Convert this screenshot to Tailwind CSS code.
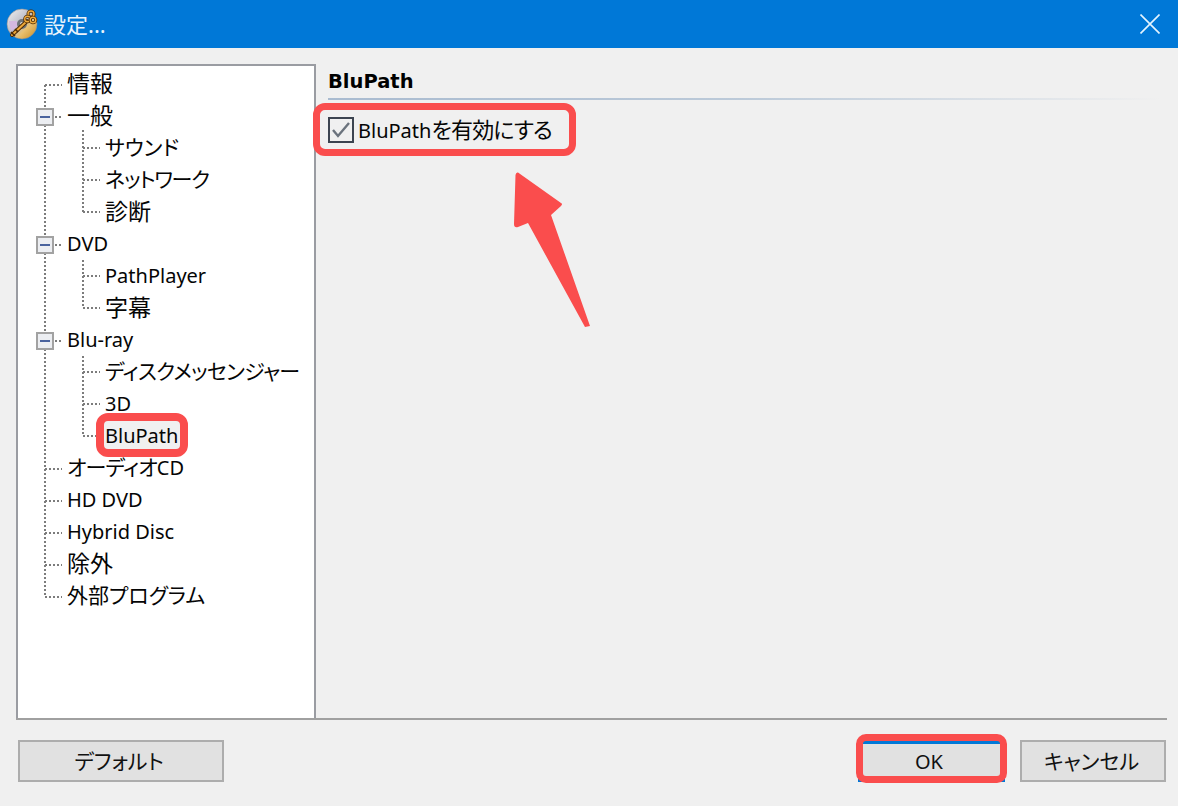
<!DOCTYPE html>
<html lang="ja">
<head>
<meta charset="utf-8">
<title>設定</title>
<script src="https://cdn.jsdelivr.net/npm/@tailwindcss/browser@4"></script>
</head>
<body class="w-[1178px] h-[806px] overflow-hidden bg-[#f0f0f0] text-black font-['Noto_Sans','Noto_Sans_CJK_JP',sans-serif] [font-feature-settings:'palt']">
<header class="h-12 bg-[#0078d7] flex items-center pl-[6px] pr-[18px] text-[#e8f3fc]">
  <svg class="w-8 h-8 shrink-0" viewBox="0 0 32 32">
    <defs>
      <linearGradient id="d" x1="0" y1="0" x2="1" y2="1"><stop offset="0" stop-color="#f4f4f4"/><stop offset=".45" stop-color="#bdbdc8"/><stop offset=".65" stop-color="#e8c070"/><stop offset="1" stop-color="#c88a20"/></linearGradient>
    </defs>
    <circle cx="16" cy="16" r="15" fill="url(#d)" stroke="#8f8f8f" stroke-width=".6"/>
    <path d="M3 13 L11 13 L11 19 L5 23 Z" fill="#d4b8e0"/>
    <circle cx="16" cy="16" r="5" fill="#6d7278"/>
    <circle cx="16" cy="16" r="2" fill="#dfe3e6"/>
    <path d="M6 27 L21 13" stroke="#4d2a05" stroke-width="4" stroke-linecap="round"/>
    <path d="M6 27 L21 13" stroke="#eca83a" stroke-width="2" stroke-linecap="round"/>
    <path d="M5 24 L9 28 M9 21 L12 24" stroke="#4d2a05" stroke-width="1.600"/>
    <circle cx="25" cy="6" r="3" fill="none" stroke="#4d2a05" stroke-width="3"/>
    <circle cx="25" cy="6" r="3" fill="none" stroke="#eeaa3c" stroke-width="1.400"/>
    <circle cx="21.500" cy="11" r="2.800" fill="none" stroke="#4d2a05" stroke-width="3"/>
    <circle cx="21.500" cy="11" r="2.800" fill="none" stroke="#eeaa3c" stroke-width="1.400"/>
    <circle cx="27" cy="12" r="2.800" fill="none" stroke="#4d2a05" stroke-width="3"/>
    <circle cx="27" cy="12" r="2.800" fill="none" stroke="#eeaa3c" stroke-width="1.400"/>
  </svg>
  <span class="ml-[6px] text-[22px] leading-none">設定...</span>
  <svg class="ml-auto w-5 h-5" viewBox="0 0 20 20" fill="none" stroke="#e4f4ff" stroke-width="1.600"><path d="M.5.5l19 19M19.500.5l-19 19"/></svg>
</header>

<main class="mt-4 ml-4 mr-[11px] h-[656px] border-b-2 border-[#a0a0a0] flex">
  <nav class="relative w-[300px] h-full border-2 border-b-0 border-[#9a9ca2] bg-white pt-px text-[23px] leading-8 text-[#050505]">
    <svg class="absolute left-[-2px] top-[-2px]" width="300" height="656" fill="none" stroke="#7c7c7c" stroke-width="2" stroke-dasharray="2 2">
      <path d="M29 21V533"/>
      <path d="M29 21H46M39 53H46M39 181H46M39 277H46M29 405H46M29 437H46M29 469H46M29 501H46M29 533H46"/>
      <path d="M67 66V148M67 84H84M67 116H84M67 148H84"/>
      <path d="M67 196V244M67 212H84M67 244H84"/>
      <path d="M67 292V372M67 308H84M67 340H84M67 372H84"/>
    </svg>
    <div class="relative pl-[49px] h-8">情報</div>
    <div class="relative pl-[49px] h-8">
      <span class="absolute left-[18px] top-[9px] w-[18px] h-[18px] border-2 border-[#a2a2a2] bg-[#eceef2] flex items-center justify-center"><i class="block w-[10px] h-[2px] bg-[#4a639e]"></i></span>一般</div>
    <div class="relative pl-[87px] h-8 text-[21px]">サウンド</div>
    <div class="relative pl-[87px] h-8 text-[21px] tracking-[-1.200px]">ネットワーク</div>
    <div class="relative pl-[87px] h-8">診断</div>
    <div class="relative pl-[49px] h-8 text-[20px] leading-[34px]">
      <span class="absolute left-[18px] top-[9px] w-[18px] h-[18px] border-2 border-[#a2a2a2] bg-[#eceef2] flex items-center justify-center"><i class="block w-[10px] h-[2px] bg-[#4a639e]"></i></span>DVD</div>
    <div class="relative pl-[87px] h-8 text-[20px] leading-[34px]">PathPlayer</div>
    <div class="relative pl-[87px] h-8">字幕</div>
    <div class="relative pl-[49px] h-8 text-[20px] leading-[34px]">
      <span class="absolute left-[18px] top-[9px] w-[18px] h-[18px] border-2 border-[#a2a2a2] bg-[#eceef2] flex items-center justify-center"><i class="block w-[10px] h-[2px] bg-[#4a639e]"></i></span>Blu-ray</div>
    <div class="relative pl-[87px] h-8 whitespace-nowrap text-[21px] tracking-[-0.700px]">ディスクメッセンジャー</div>
    <div class="relative pl-[87px] h-8 text-[20px] leading-[34px]">3D</div>
    <div class="relative pl-[87px] h-8 text-[20px] leading-[34px]">
      <span class="relative inline-block">
        <span class="absolute left-[-9px] top-[-6px] w-[92px] h-[44px] border-[8px] border-[#fa4d4d] rounded-[12px] bg-[#f0f0f0]"></span>
        <span class="relative">BluPath</span>
      </span>
    </div>
    <div class="relative pl-[49px] h-8 text-[21px] tracking-[-0.800px]">オーディオ<span class="text-[20px] tracking-normal">CD</span></div>
    <div class="relative pl-[49px] h-8 text-[20px] leading-[34px]">HD DVD</div>
    <div class="relative pl-[49px] h-8 text-[20px] leading-[34px]">Hybrid Disc</div>
    <div class="relative pl-[49px] h-8">除外</div>
    <div class="relative pl-[49px] h-8 text-[21px]">外部プログラム</div>
  </nav>

  <section class="relative flex-1 pl-3 pr-[6px]">
    <h2 class="pt-1 h-[34px] font-['DejaVu_Sans',sans-serif] font-bold text-[19.500px] leading-7">BluPath</h2>
    <div class="h-[2px] bg-linear-to-r from-[#a9bbd0] via-[#bccad9] to-[#f0f0f0]"></div>
    <div class="relative mt-[16px] inline-flex items-center h-[27px] text-[22px] leading-8 text-[#050505]">
      <span class="absolute left-[-15px] top-[-13px] w-[263px] h-[53px] border-[7px] border-[#fa4d4d] rounded-[12px]"></span>
      <span class="w-[26px] h-[26px] border-2 border-[#3c4450] flex items-center justify-center">
        <svg class="w-5 h-5" viewBox="0 0 20 20" fill="none" stroke="#6b737d" stroke-width="2.400"><path d="M2 10l5 6L18 3"/></svg>
      </span>
      <span class="ml-1 whitespace-nowrap"><span class="text-[20px]">BluPath</span><span class="tracking-[-0.800px]">を有効にする</span></span>
    </div>
    <svg class="absolute left-[180px] top-[104px]" width="100" height="170" viewBox="0 0 100 170"><path d="M22 4.500Q20 4 19.500 7L18 56Q18 60 22 59L32 55 89 159 94 158 55 47 65 38Q67 36 65 35Z" fill="#fa4d4d"/></svg>
  </section>
</main>

<footer class="pl-[18px] pr-3 pt-5 flex items-start text-[21px] text-[#111]">
  <button class="w-[206px] h-[42px] border-2 border-[#adadad] bg-[#e1e1e1] leading-none pr-[4px]">デフォルト</button>
  <div class="relative ml-auto">
    <span class="absolute left-[-2px] top-[-6px] w-[151px] h-[49px] border-[7px] border-[#fa4d4d] rounded-[10px] z-10"></span>
    <button class="w-[147px] h-[42px] border-2 border-t-4 border-[#0078d7] bg-[#e1e1e1] leading-none pr-[5px] text-[20px]">OK</button>
  </div>
  <button class="ml-[15px] w-[146px] h-[42px] border-2 border-[#adadad] bg-[#e1e1e1] leading-none pr-[3px]">キャンセル</button>
</footer>
</body>
</html>
